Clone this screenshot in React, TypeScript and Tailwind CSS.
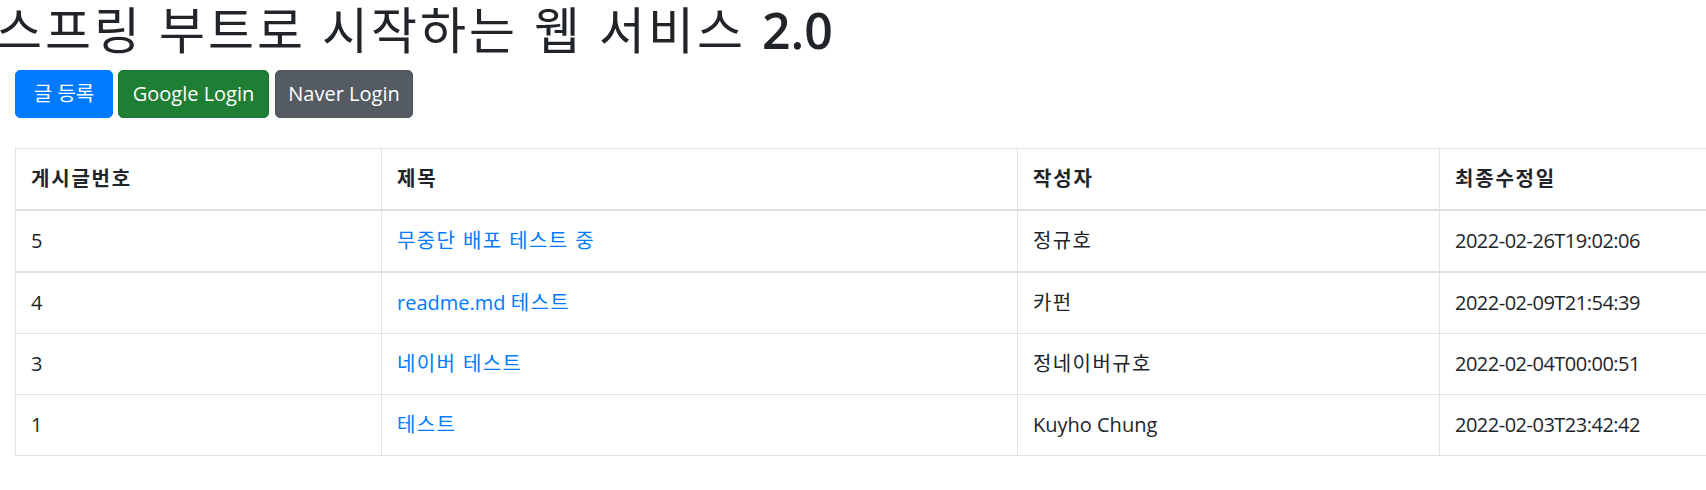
import React from "react"

const posts = [
  { id: 5, title: "무중단 배포 테스트 중", author: "정규호", modified: "2022-02-26T19:02:06" },
  { id: 4, title: "readme.md 테스트", author: "카펀", modified: "2022-02-09T21:54:39" },
  { id: 3, title: "네이버 테스트", author: "정네이버규호", modified: "2022-02-04T00:00:51" },
  { id: 1, title: "테스트", author: "Kuyho Chung", modified: "2022-02-03T23:42:42" },
]

// hangul runs render a touch wider in the original font
function Ko({ text }: { text: string }) {
  const parts = text.split(/([\uAC00-\uD7A3][\uAC00-\uD7A3 ]*)/)
  return (
    <>
      {parts.map((part, i) =>
        /[\uAC00-\uD7A3]/.test(part) ? (
          <span key={i} className="tracking-[1.4px]">
            {part}
          </span>
        ) : (
          part
        )
      )}
    </>
  )
}

export default function App() {
  return (
    <div className="w-[1706px] h-[490px] overflow-hidden bg-white text-[#212529] font-['Open_Sans','Noto_Sans_CJK_KR',sans-serif]">
      <h1 className="-ml-[4px] mb-[10px] whitespace-nowrap text-[50px] leading-[60px] font-normal">
        <span className="tracking-[3px]">스프링 부트로 시작하는 웹 서비스 </span>
        <span className="font-semibold">2.0</span>
      </h1>

      <div className="pl-[15px]">
        <div className="flex gap-[5px]">
          <a href="#" className="flex h-[48px] w-[98px] items-center justify-center rounded-[5px] border border-[#007bff] bg-[#007bff] text-[20px] text-white">
            글 등록
          </a>
          <a href="#" className="flex h-[48px] w-[151px] items-center justify-center rounded-[5px] border border-[#1c7430] bg-[#1e7e34] text-[20px] text-white">
            Google Login
          </a>
          <a href="#" className="ml-[1px] flex h-[48px] w-[138px] items-center justify-center rounded-[5px] border border-[#4e555b] bg-[#545b62] text-[20px] text-white">
            Naver Login
          </a>
        </div>

        <table className="mt-[30px] w-[1845px] table-fixed border-separate border-spacing-0 border-l border-t border-[#dee2e6] text-left text-[20px] leading-[30px]">
          <colgroup>
            <col className="w-[366px]" />
            <col className="w-[636px]" />
            <col className="w-[422px]" />
            <col className="w-[420px]" />
          </colgroup>
          <thead>
            <tr>
              <th className="border-b-2 border-r border-[#dee2e6] p-[15px] font-bold tracking-[1.8px]">게시글번호</th>
              <th className="border-b-2 border-r border-[#dee2e6] p-[15px] font-bold tracking-[1.8px]">제목</th>
              <th className="border-b-2 border-r border-[#dee2e6] p-[15px] font-bold tracking-[1.8px]">작성자</th>
              <th className="border-b-2 border-r border-[#dee2e6] p-[15px] font-bold tracking-[1.8px]">최종수정일</th>
            </tr>
          </thead>
          <tbody>
            {posts.map((p, i) => {
              const cell =
                i === 0
                  ? "border-b-2 border-r border-[#dee2e6] p-[15px]"
                  : "border-b border-r border-[#dee2e6] p-[15px]"
              return (
                <tr key={p.id}>
                  <td className={cell}>{p.id}</td>
                  <td className={cell}>
                    <a href="#" className="text-[#007bff]">
                      <Ko text={p.title} />
                    </a>
                  </td>
                  <td className={cell}>
                    <Ko text={p.author} />
                  </td>
                  <td className={cell + " tracking-[-0.5px]"}>{p.modified}</td>
                </tr>
              )
            })}
          </tbody>
        </table>
      </div>
    </div>
  )
}
